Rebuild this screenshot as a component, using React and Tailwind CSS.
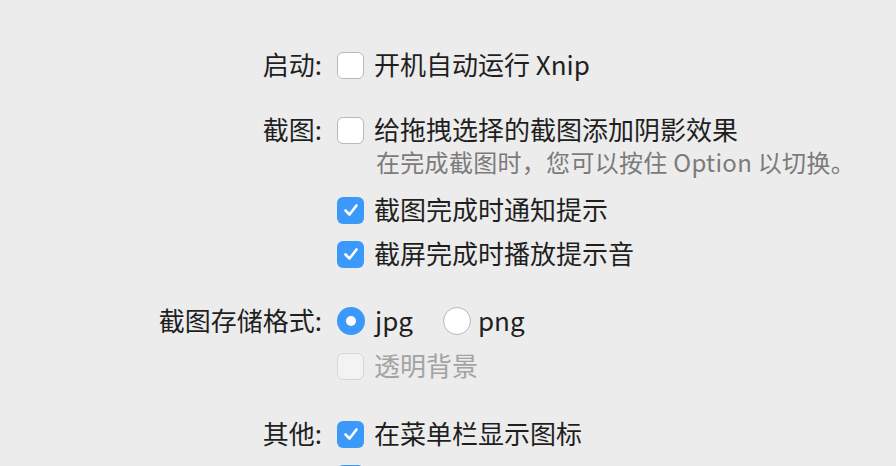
import React, { useState } from 'react'

const font = { fontFamily: '"Noto Sans CJK SC", "Noto Sans", sans-serif' }

function Box({ checked, disabled }) {
  if (checked) {
    return (
      <span className="w-[27px] h-[27px] rounded-[6px] bg-[#3b99fc] flex items-center justify-center shrink-0">
        <svg width="18" height="18" viewBox="0 0 18 18" fill="none">
          <path d="M3.5 9.5 L7.5 13.5 L14.5 4.5" stroke="white" strokeWidth="2.6" strokeLinecap="round" strokeLinejoin="round" />
        </svg>
      </span>
    )
  }
  return (
    <span className={`w-[27px] h-[27px] rounded-[6px] border shrink-0 ${disabled ? 'bg-[#f3f3f3] border-[#d6d6d6]' : 'bg-white border-[#b9b9b9]'}`} />
  )
}

function Radio({ on }) {
  return on ? (
    <span className="w-[28px] h-[28px] rounded-full bg-[#3b99fc] flex items-center justify-center shrink-0">
      <span className="w-[10px] h-[10px] rounded-full bg-white" />
    </span>
  ) : (
    <span className="w-[28px] h-[28px] rounded-full bg-white border border-[#b9b9b9] shrink-0" />
  )
}

function Row({ label, children, className = '' }) {
  return (
    <div className={`flex items-center h-[44px] ${className}`}>
      <div className="w-[324px] text-right pr-[2px] text-[#1f1f1f] pb-[2px]">{label}</div>
      <div className="ml-[13px] flex items-center">{children}</div>
    </div>
  )
}

export default function App() {
  const [fmt, setFmt] = useState('jpg')
  return (
    <div className="w-[896px] h-[466px] bg-[#ececec] overflow-hidden text-[26px] leading-none pt-[43px]" style={font}>
      <Row label="启动:">
        <Box />
        <span className="ml-[10px] text-[#1f1f1f] pb-[2px]">开机自动运行 Xnip</span>
      </Row>

      <Row label="截图:" className="mt-[21px]">
        <Box />
        <span className="ml-[10px] text-[#1f1f1f] pb-[2px]">给拖拽选择的截图添加阴影效果</span>
      </Row>
      <div className="h-[22px] flex items-center pl-[376px] text-[24px] tracking-[0.3px] text-[#7b7b7b] pb-[2px]">
        在完成截图时，您可以按住 Option 以切换。
      </div>

      <Row label="" className="mt-[14px]">
        <Box checked />
        <span className="ml-[10px] text-[#1f1f1f] pb-[2px]">截图完成时通知提示</span>
      </Row>
      <Row label="">
        <Box checked />
        <span className="ml-[10px] text-[#1f1f1f] pb-[2px]">截屏完成时播放提示音</span>
      </Row>

      <Row label="截图存储格式:" className="mt-[23px]">
        <button onClick={() => setFmt('jpg')} className="flex items-center">
          <Radio on={fmt === 'jpg'} />
          <span className="ml-[10px] text-[#1f1f1f] pb-[2px]">jpg</span>
        </button>
        <button onClick={() => setFmt('png')} className="flex items-center ml-[30px]">
          <Radio on={fmt === 'png'} />
          <span className="ml-[7px] text-[#1f1f1f] pb-[2px]">png</span>
        </button>
      </Row>
      <Row label="" className="mt-px">
        <Box disabled />
        <span className="ml-[10px] text-[#a3a3a3] pb-[2px]">透明背景</span>
      </Row>

      <Row label="其他:" className="mt-[24px]">
        <Box checked />
        <span className="ml-[10px] text-[#1f1f1f] pb-[2px]">在菜单栏显示图标</span>
      </Row>
      <Row label="">
        <Box checked />
      </Row>
    </div>
  )
}
